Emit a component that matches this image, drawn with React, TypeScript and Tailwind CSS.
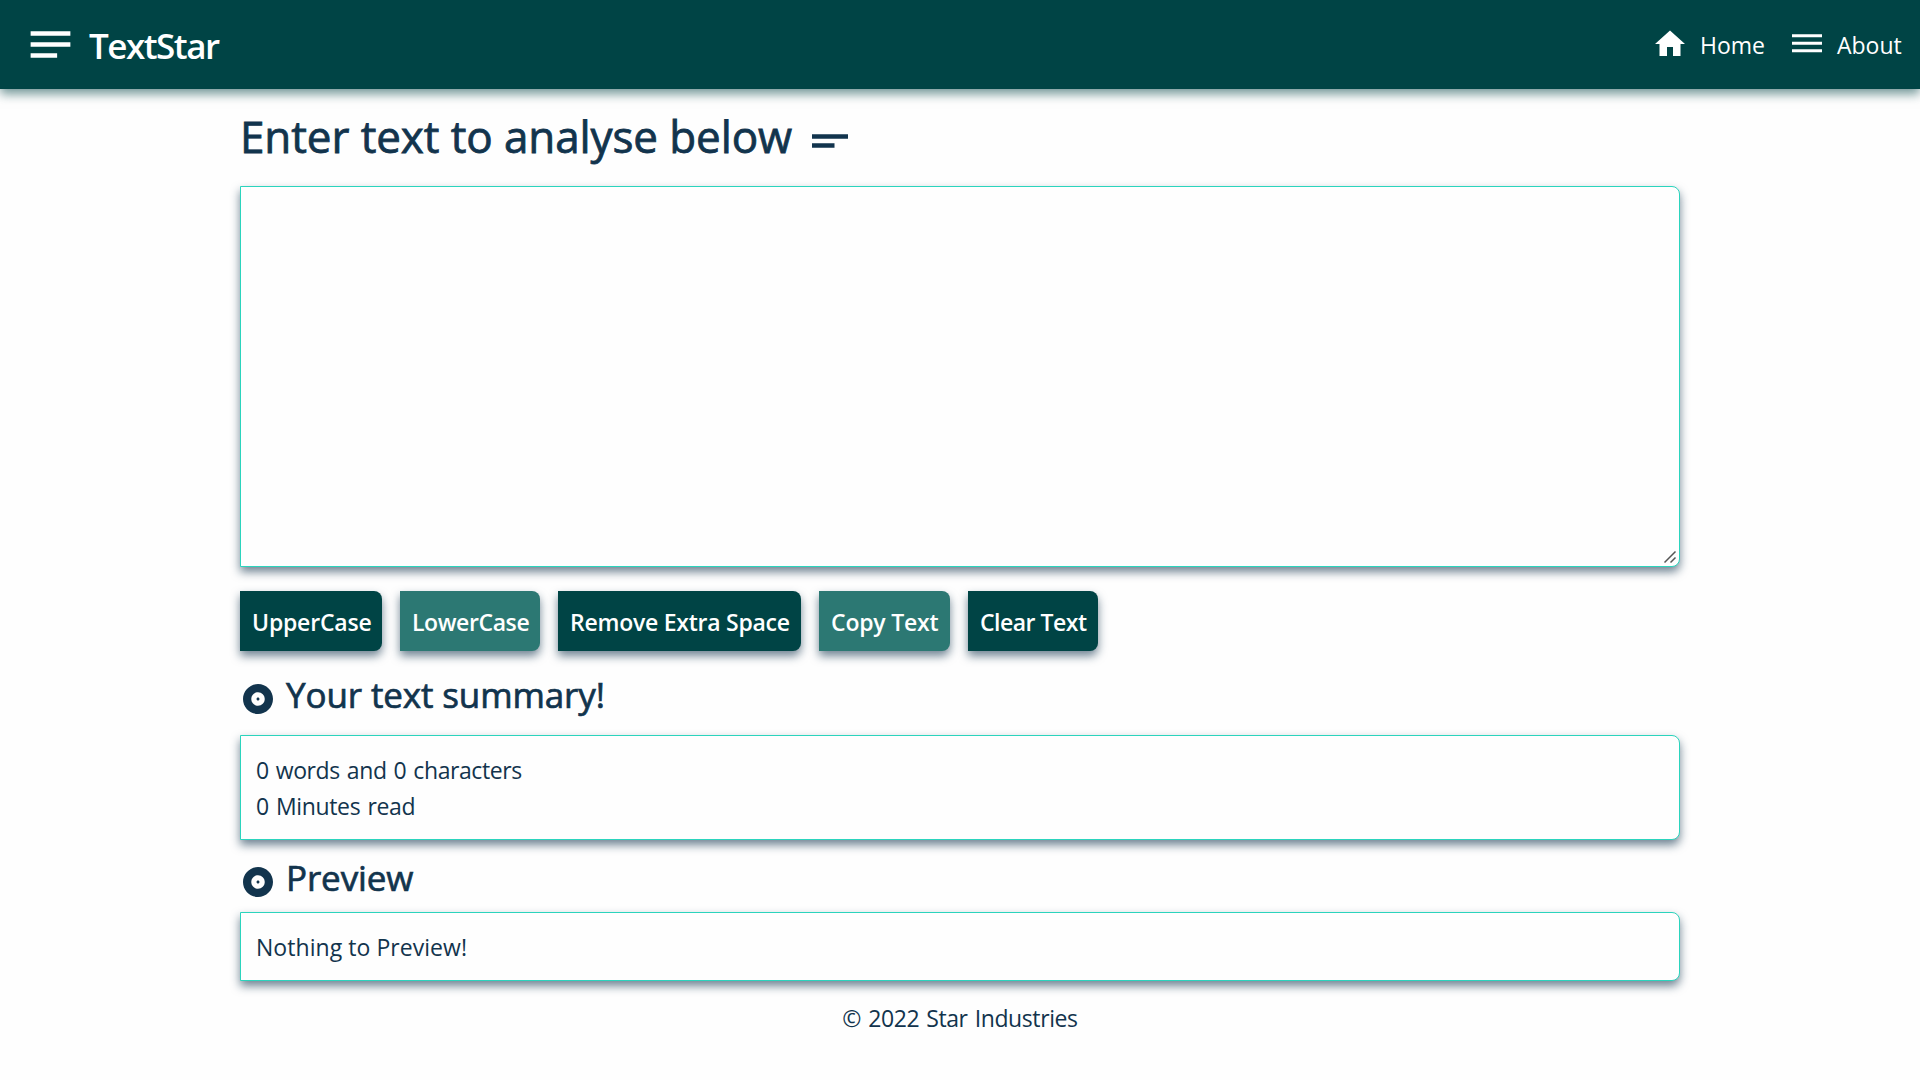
import type { ReactNode } from 'react';
import { MdAlbum, MdDehaze, MdHome, MdNotes, MdShortText } from 'react-icons/md';

const panel =
  'block w-full rounded-r-[8px] border border-[#2bd4bd] bg-[#fefefe] shadow-[0_5px_10px_rgba(18,52,77,0.6)]';

const actions = [
  { label: 'UpperCase', style: 'w-[142px] bg-[#004445] pl-3 tracking-[-0.2px]' },
  { label: 'LowerCase', style: 'w-[140px] bg-[#2c7873] pl-3 tracking-[-0.4px]' },
  { label: 'Remove Extra Space', style: 'w-[243px] bg-[#004445] pl-3 tracking-[-0.25px]' },
  { label: 'Copy Text', style: 'w-[131px] bg-[#2c7873] pl-3 tracking-[-0.2px]' },
  { label: 'Clear Text', style: 'w-[130px] bg-[#004445] pl-3 tracking-[-0.5px]' },
];

function SectionTitle({ children }: { children: ReactNode }) {
  return (
    <>
      <MdAlbum className="mt-[10px] size-9" />
      <h2 className="mt-[3px] ml-[10px] text-[35px] leading-[42px] font-medium tracking-[-0.12px] [-webkit-text-stroke:0.7px]">
        {children}
      </h2>
    </>
  );
}

export default function App() {
  return (
    <div className="h-[1080px] overflow-hidden bg-[#fefefe] font-['Open_Sans',sans-serif] text-[23px] leading-9 text-[#12344d]">
      <nav className="flex h-[89px] items-center bg-[#004445] pr-[18px] pl-6 text-white shadow-[0_5px_10px_rgba(0,68,69,0.55)]">
        <MdNotes className="size-[53px]" />
        <span className="ml-3 pt-[2px] text-[35px] leading-[42px] font-semibold tracking-[-1.5px]">TextStar</span>
        <div className="ml-auto flex items-center">
          <MdHome className="mb-px size-9" />
          <a className="ml-3 w-[65px] pt-px">Home</a>
          <MdDehaze className="mb-px ml-6 size-9" />
          <a className="ml-3 w-[65px] pt-px">About</a>
        </div>
      </nav>

      <main className="mx-auto w-[1440px]">
        <div className="flex h-[97px] items-start pt-[20px]">
          <h1 className="text-[44px] leading-[54px] font-medium tracking-[-0.1px] [-webkit-text-stroke:0.8px]">
            Enter text to analyse below
          </h1>
          <MdShortText className="mt-[5px] ml-[11px] size-[54px]" />
        </div>
        <div className="relative">
          <textarea className={`${panel} h-[381px] resize-none p-[15px] outline-none`} />
          <svg
            className="pointer-events-none absolute right-[3px] bottom-[3px] size-[14px]"
            viewBox="0 0 14 14"
            fill="none"
            stroke="#555"
            strokeWidth="1.5"
          >
            <path d="M1.5 12.5 L12.5 1.5 M7.5 12.5 L12.5 7.5" />
          </svg>
        </div>
        <div className="mt-6 flex gap-[18px]">
          {actions.map((a) => (
            <button
              key={a.label}
              className={`h-[60px] rounded-r-[8px] pt-px text-left font-semibold whitespace-nowrap text-white shadow-[0_5px_10px_rgba(18,52,77,0.6)] ${a.style}`}
            >
              {a.label}
            </button>
          ))}
        </div>
        <div className="flex h-[84px] items-start pt-[20px]">
          <SectionTitle>Your text summary!</SectionTitle>
        </div>
        <div className={`${panel} h-[105px] px-[15px] pt-4`}>
          <p className="tracking-[-0.42px] [word-spacing:1.5px]">0 words and 0 characters</p>
          <p className="tracking-[-0.35px] [word-spacing:1.5px]">0 Minutes read</p>
        </div>
        <div className="flex h-[72px] items-start pt-[14px]">
          <SectionTitle>Preview</SectionTitle>
        </div>
        <div className={`${panel} h-[69px] px-[15px] pt-4`}>
          <p className="tracking-[0.05px]">Nothing to Preview!</p>
        </div>
      </main>
      <footer className="mt-[19px] text-center tracking-[-0.4px] [word-spacing:1.5px]">© 2022 Star Industries</footer>
    </div>
  );
}
